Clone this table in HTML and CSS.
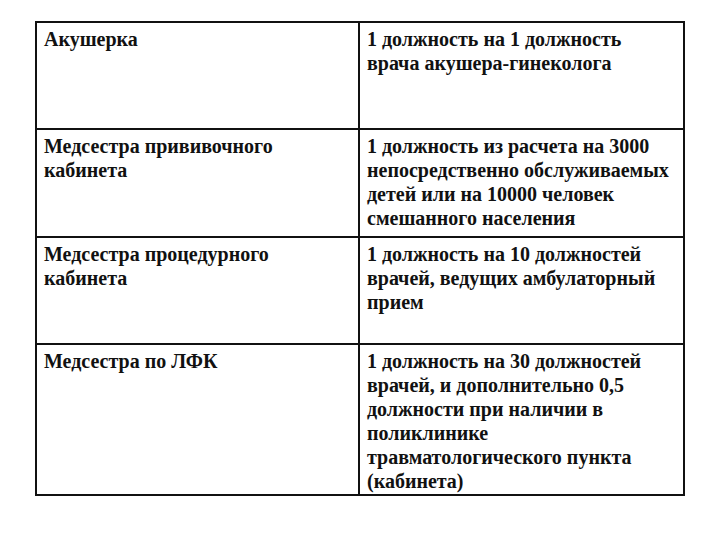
FILE: index.html
```html
<!DOCTYPE html>
<html lang="ru">
<head>
<meta charset="utf-8">
<link rel="stylesheet" href="styles.css">
</head>
<body>
<div class="page">
<table class="staff">
<colgroup><col class="c1"><col class="c2"></colgroup>
<tr class="r1">
<td>Акушерка</td>
<td>1 должность на 1 должность<br>врача акушера-гинеколога</td>
</tr>
<tr class="r2">
<td>Медсестра прививочного<br>кабинета</td>
<td>1 должность из расчета на 3000<br>непосредственно обслуживаемых<br>детей или на 10000 человек<br>смешанного населения</td>
</tr>
<tr class="r3">
<td>Медсестра процедурного<br>кабинета</td>
<td>1 должность на 10 должностей<br>врачей, ведущих амбулаторный<br>прием</td>
</tr>
<tr class="r4">
<td>Медсестра по ЛФК</td>
<td>1 должность на 30 должностей<br>врачей, и дополнительно 0,5<br>должности при наличии в<br>поликлинике<br>травматологического пункта<br>(кабинета)</td>
</tr>
</table>
</div>
</body>
</html>
```
FILE: styles.css
```css
html, body {
  margin: 0;
  padding: 0;
  background: #fff;
}
.page {
  padding: 21px 0 0 35px;
}
.staff {
  border-collapse: collapse;
  width: 648px;
  table-layout: fixed;
  font-family: "Liberation Serif", "Times New Roman", serif;
  font-weight: bold;
  font-size: 20px;
  line-height: 24px;
  color: #111;
}
.c1 { width: 323px; }
.c2 { width: 325px; }
.staff td {
  border: 2px solid #111;
  vertical-align: top;
  padding: 4px 6px 0 7px;
  white-space: nowrap;
}
.r1 td { height: 101px; }
.r2 td { height: 102px; }
.r3 td { height: 101px; }
.r4 td { height: 145px; }
```
